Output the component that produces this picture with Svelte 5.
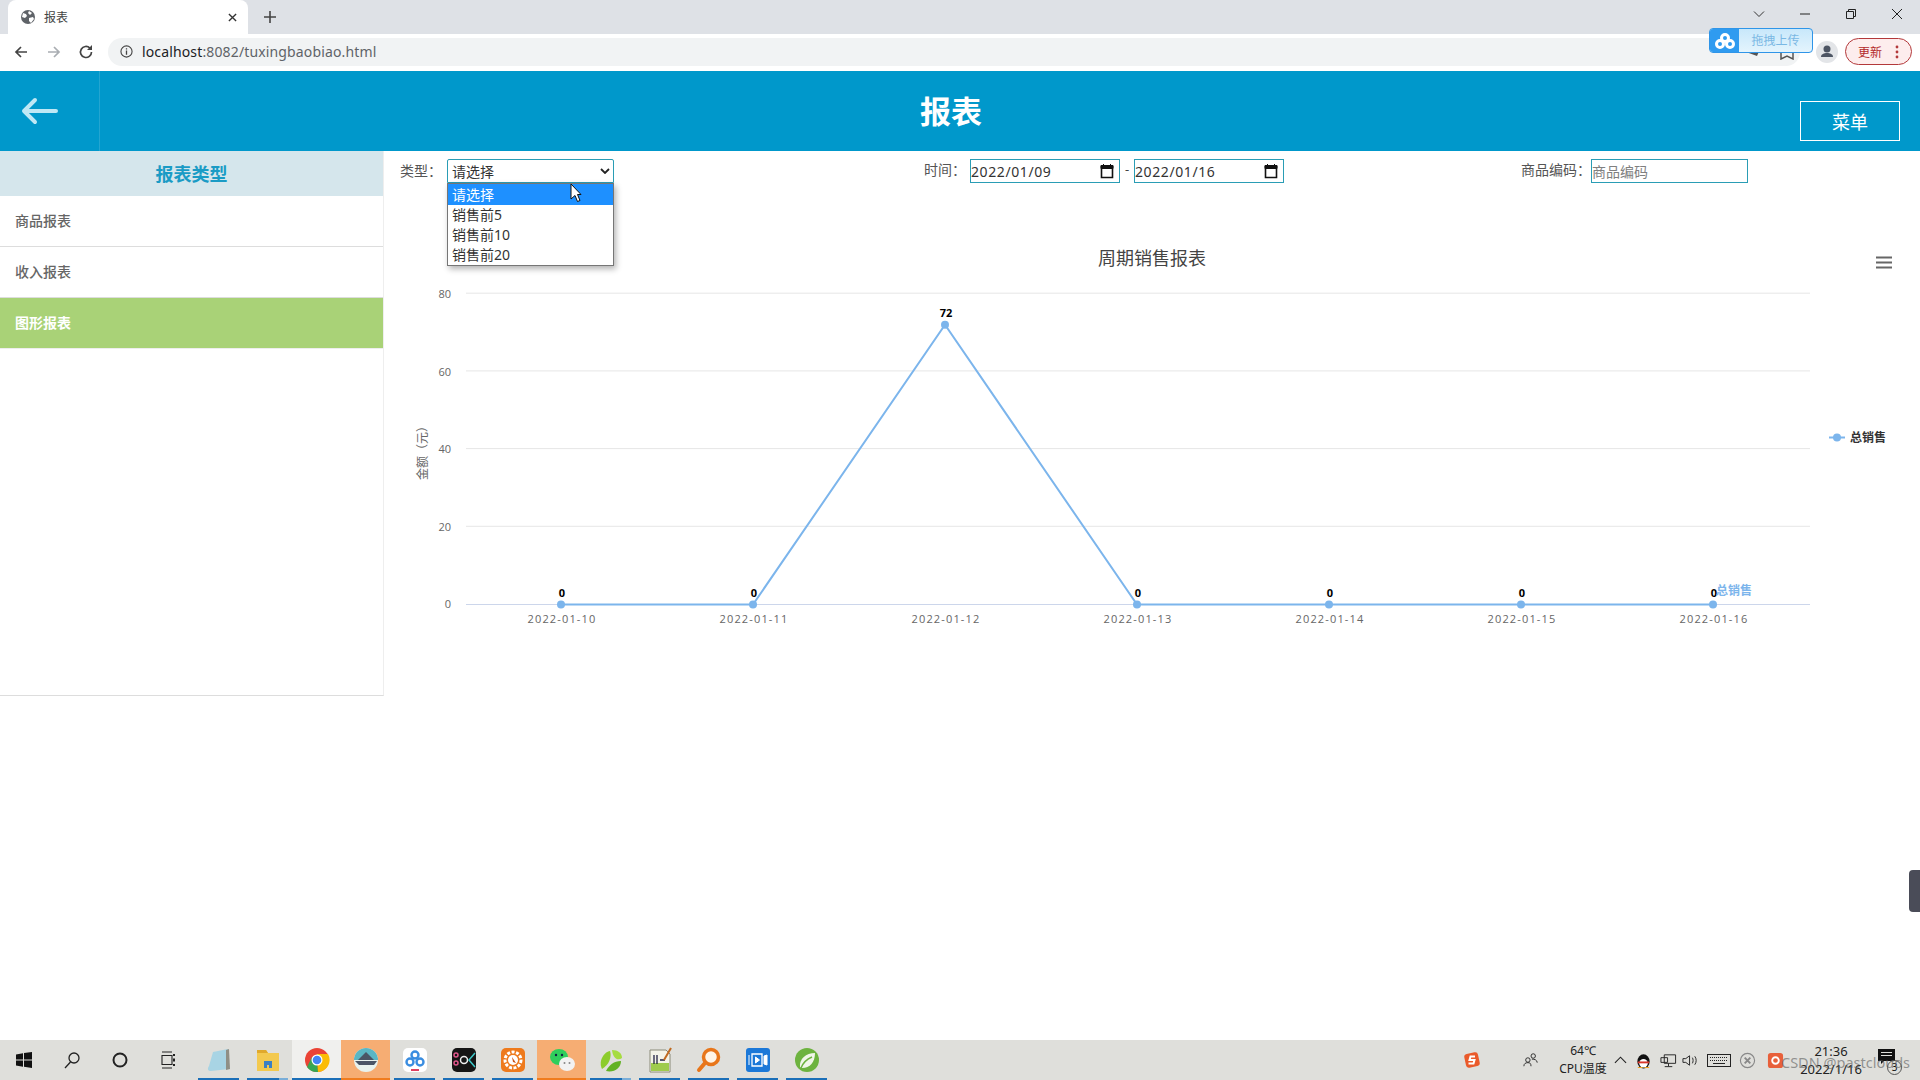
<script>
  const points = [
    { d: '2022-01-10', v: 0, x: 561 },
    { d: '2022-01-11', v: 0, x: 753 },
    { d: '2022-01-12', v: 72, x: 945 },
    { d: '2022-01-13', v: 0, x: 1137 },
    { d: '2022-01-14', v: 0, x: 1329 },
    { d: '2022-01-15', v: 0, x: 1521 },
    { d: '2022-01-16', v: 0, x: 1713 }
  ];
  const yOf = (v) => 604.5 - v * 3.885;
  const line = points.map((p) => `${p.x},${yOf(p.v)}`).join(' ');
  const ticks = [80, 60, 40, 20, 0];
  const menu = ['商品报表', '收入报表', '图形报表'];
  const options = ['请选择', '销售前5', '销售前10', '销售前20'];
</script>

<div class="screen">
  <div class="tabstrip">
    <div class="tab">
      <svg class="fav" viewBox="0 0 16 16"><circle cx="8" cy="8" r="7" fill="#5f6368"/><path d="M3 4l3 1 1 2-2 2-3-1zM9 2l3 2-2 2-2-2zM9 9l4-1 1 2-3 4-2-2z" fill="#fff"/></svg>
      <span class="tabtitle">报表</span>
      <svg class="tabx" viewBox="0 0 10 10"><path d="M1 1l8 8M9 1l-8 8" stroke="#333" stroke-width="1.5"/></svg>
    </div>
    <svg class="plus" viewBox="0 0 12 12"><path d="M6 0v12M0 6h12" stroke="#444" stroke-width="1.6"/></svg>
    <div class="winctl">
      <svg viewBox="0 0 12 12"><path d="M1 3.5l5 5 5-5" fill="none" stroke="#333"/></svg>
      <svg viewBox="0 0 12 12"><path d="M1 6h10" stroke="#222" stroke-width="1"/></svg>
      <svg viewBox="0 0 12 12"><path d="M1.5 3.5h7v7h-7zM3.5 3.5v-2h7v7h-2" fill="none" stroke="#222"/></svg>
      <svg viewBox="0 0 12 12"><path d="M1 1l10 10M11 1l-10 10" stroke="#222"/></svg>
    </div>
  </div>

  <div class="toolbar">
    <svg class="nav back" viewBox="0 0 16 16"><path d="M14 8H3M8 3L3 8l5 5" fill="none" stroke="#444" stroke-width="1.7"/></svg>
    <svg class="nav fwd" viewBox="0 0 16 16"><path d="M2 8h11M8 3l5 5-5 5" fill="none" stroke="#a9adb2" stroke-width="1.7"/></svg>
    <svg class="nav reload" viewBox="0 0 16 16"><path d="M13.5 8a5.5 5.5 0 1 1-1.6-3.9" fill="none" stroke="#444" stroke-width="1.7"/><path d="M14 1v5H9z" fill="#444"/></svg>
    <div class="address">
      <svg class="info" viewBox="0 0 14 14"><circle cx="7" cy="7" r="6" fill="none" stroke="#444" stroke-width="1.2"/><path d="M7 6v4.500M7 3.500v1.400" stroke="#444" stroke-width="1.400"/></svg>
      <span class="url">localhost<span class="urlrest">:8082/tuxingbaobiao.html</span></span>
      <svg class="addr-end" viewBox="0 0 60 20"><path d="M3 12l14-3-3 7z" fill="#555"/><path d="M38 10h12v9l-6-3-6 3z" fill="none" stroke="#555" stroke-width="1.500"/></svg>
    </div>
    <div class="avatar"><svg viewBox="0 0 22 22"><circle cx="11" cy="8" r="3.500" fill="#4d5563"/><path d="M5 16c0-3 3-4 6-4s6 1 6 4z" fill="#4d5563"/></svg></div>
    <div class="update"><span>更新</span><svg viewBox="0 0 4 14"><circle cx="2" cy="2" r="1.400" fill="#b3383a"/><circle cx="2" cy="7" r="1.400" fill="#b3383a"/><circle cx="2" cy="12" r="1.400" fill="#b3383a"/></svg></div>
  </div>

  <div class="page">
    <header class="head">
      <div class="backcell">
        <svg viewBox="0 0 38 28"><path d="M3 14h32M14 3L3 14l11 11" fill="none" stroke="#bfe8f5" stroke-width="4" stroke-linecap="round" stroke-linejoin="round"/></svg>
      </div>
      <h1>报表</h1>
      <button class="menubtn">菜单</button>
    </header>

    <div class="body">
      <aside class="side">
        <div class="sidehead">报表类型</div>
        {#each menu as m, i}
          <div class="sideitem" class:active={i === 2}>{m}</div>
        {/each}
      </aside>

      <main class="main">
        <div class="filters">
          <div class="group g1">
            <label class="lb" for="sel">类型：</label>
            <div class="select" id="sel">
              <span>请选择</span>
              <svg viewBox="0 0 10 6"><path d="M1 1l4 4 4-4" fill="none" stroke="#222" stroke-width="1.800"/></svg>
            </div>
          </div>
          <div class="group g2">
            <span class="lb time">时间：</span>
            <div class="date"><span>2022/01/09</span><svg viewBox="0 0 14 16"><path d="M1.500 3.500h11v11h-11z" fill="none" stroke="#111" stroke-width="1.600"/><path d="M1 2.500h12v3H1zM3.500 1v2M10.500 1v2" fill="#111" stroke="#111"/></svg></div>
            <span class="dash">-</span>
            <div class="date"><span>2022/01/16</span><svg viewBox="0 0 14 16"><path d="M1.500 3.500h11v11h-11z" fill="none" stroke="#111" stroke-width="1.600"/><path d="M1 2.500h12v3H1zM3.500 1v2M10.500 1v2" fill="#111" stroke="#111"/></svg></div>
          </div>
          <div class="group g3">
            <label class="lb code" for="code">商品编码：</label>
            <input id="code" class="codeinput" placeholder="商品编码" />
          </div>
        </div>

        <svg class="chart" viewBox="384 230 1536 480">
          <text x="1152" y="265" text-anchor="middle" class="title">周期销售报表</text>
          <g stroke="#666" stroke-width="2.200">
            <path d="M1876 257.500h16M1876 262.500h16M1876 267.500h16"/>
          </g>
          {#each ticks as t}
            <line x1="466" x2="1810" y1={yOf(t) - (t === 0 ? 0 : 0.5)} y2={yOf(t) - (t === 0 ? 0 : 0.5)} stroke={t === 0 ? '#ccd6eb' : '#e6e6e6'} stroke-width="1"/>
            <text x="451" y={yOf(t) + (t === 0 ? 3.5 : 4.2)} text-anchor="end" class="tick">{t}</text>
          {/each}
          <text transform="translate(427 450) rotate(-90)" text-anchor="middle" class="axistitle">金额（元）</text>
          <polyline points={line} fill="none" stroke="#7cb5ec" stroke-width="2"/>
          {#each points as p}
            <circle cx={p.x} cy={yOf(p.v)} r="4" fill="#7cb5ec"/>
            <text x={p.x + 1} y={yOf(p.v) - 8} text-anchor="middle" class="dl">{p.v}</text>
            <text x={p.x + 1} y="623" text-anchor="middle" class="tick date-tick">{p.d}</text>
          {/each}
          <text x="1716" y="595" class="serieslabel">总销售</text>
          <path d="M1829 437.500h16" stroke="#7cb5ec" stroke-width="2"/>
          <circle cx="1837" cy="437.500" r="4" fill="#7cb5ec"/>
          <text x="1850" y="442" class="legend">总销售</text>
        </svg>

        <ul class="dropdown">
          {#each options as o, i}
            <li class:hl={i === 0}>{o}</li>
          {/each}
        </ul>
        <svg class="cursor" viewBox="0 0 12 20"><path d="M1 1v15l4-3.500 2.500 6 2.500-1-2.500-6H11z" fill="#fff" stroke="#111"/></svg>
      </main>
    </div>
    <div class="edgetab"></div>
  </div>

  <footer class="taskbar">
    <div class="tk sys"><svg viewBox="0 0 18 18"><path d="M1 3.500l7-1.200v6.200H1zM9 2.100L17 1v7.500H9zM1 9.500h7v6.200l-7-1.200zM9 9.500h8V17l-8-1.200z" fill="#111"/></svg></div>
    <div class="tk sys"><svg viewBox="0 0 18 18"><circle cx="11" cy="7" r="5" fill="none" stroke="#222" stroke-width="1.300"/><path d="M7.500 11L2 17" stroke="#222" stroke-width="1.300"/></svg></div>
    <div class="tk sys"><svg viewBox="0 0 18 18"><circle cx="9" cy="9" r="6.500" fill="none" stroke="#222" stroke-width="2"/></svg></div>
    <div class="tk sys last"><svg viewBox="0 0 18 18"><path d="M3 1h10M3 17h10M3 4.500h10v9H3z" fill="none" stroke="#222" stroke-width="1.100"/><path d="M15 3v2M15 7.500v3M15 13v2" stroke="#222" stroke-width="2"/></svg></div>

    <div class="tk on"><svg viewBox="0 0 26 26"><path d="M7 5l15-3 1 20-18 2C2 24 1 22 3 19z" fill="#a8d4e4"/><path d="M20 3l3-1 1 20-4 1z" fill="#8f8f86"/></svg></div>
    <div class="tk on stk"><svg viewBox="0 0 26 26"><path d="M2 3h9l2 3h11v18H2z" fill="#f3c94f"/><path d="M9 21v-7h8v7h-3v-3h-2v3z" fill="#3c80c4"/><path d="M2 3h9l2 3H2z" fill="#e0a92c"/></svg></div>
    <div class="tk on light"><svg viewBox="0 0 26 26"><circle cx="13" cy="13" r="12" fill="#ea4335"/><path d="M13 13L3 20a12 12 0 0 0 11 5z" fill="#34a853"/><path d="M13 7h11a12 12 0 0 1-10 18z" fill="#fbbc05"/><path d="M3 20L8 10l5 3z" fill="#34a853"/><circle cx="13" cy="13" r="5.500" fill="#fff"/><circle cx="13" cy="13" r="4.300" fill="#4285f4"/></svg></div>
    <div class="tk act"><svg viewBox="0 0 26 26"><circle cx="13" cy="13" r="12" fill="#e8f2ee"/><path d="M1 13a12 12 0 0 1 24 0z" fill="#5bb6c4"/><path d="M5 13l8-8 8 8zM2 14h22l-3 4H6z" fill="#4a5566"/></svg></div>
    <div class="tk on"><svg viewBox="0 0 26 26"><rect x="1" y="1" width="24" height="24" rx="5" fill="#fff"/><g fill="none" stroke="#3a8de0" stroke-width="2.400"><circle cx="13" cy="8" r="3.500"/><circle cx="8" cy="15" r="3.500"/><circle cx="18" cy="15" r="3.500"/></g><rect x="9" y="22" width="8" height="2" fill="#e04060"/></svg></div>
    <div class="tk on"><svg viewBox="0 0 26 26"><rect x="1" y="1" width="24" height="24" rx="5" fill="#151515"/><g fill="none" stroke-width="1.500"><circle cx="5" cy="8" r="2" stroke="#e0568a"/><circle cx="5" cy="16" r="2" stroke="#e0568a"/><circle cx="13" cy="13" r="3.500" stroke="#eee"/><path d="M24 6l-6 7 6 7" stroke="#3dc8c8"/></g></svg></div>
    <div class="tk on"><svg viewBox="0 0 26 26"><rect x="1" y="1" width="24" height="24" rx="5" fill="#ee7a1c"/><circle cx="13" cy="13" r="8" fill="none" stroke="#fff" stroke-width="3" stroke-dasharray="3 1.500"/><circle cx="13" cy="13" r="5" fill="#fff"/><path d="M12 10l4 6-3-1z" fill="#c9541a"/></svg></div>
    <div class="tk act"><svg viewBox="0 0 26 26"><ellipse cx="10" cy="10" rx="9" ry="8" fill="#2fce5c"/><circle cx="7" cy="8" r="1.200" fill="#124"/><circle cx="13" cy="8" r="1.200" fill="#124"/><ellipse cx="18" cy="17" rx="8" ry="7" fill="#f2f2f2"/><circle cx="15.500" cy="16" r="1" fill="#888"/><circle cx="20.500" cy="16" r="1" fill="#888"/></svg></div>
    <div class="tk on stk"><svg viewBox="0 0 26 26"><path d="M4 22C0 14 6 5 12 4c2 6-1 14-8 18z" fill="#8ccc2c"/><path d="M14 3c6 0 10 3 10 8-4 3-9 1-10-8z" fill="#a6dc40"/><path d="M8 24c3-6 8-10 15-10 0 7-7 12-15 10z" fill="#62b224"/></svg></div>
    <div class="tk on"><svg viewBox="0 0 26 26"><path d="M3 3h16l4 4v18H3z" fill="#f4f4e8" stroke="#8a8a78"/><path d="M4 16h18v8H4z" fill="#9ecb4c"/><path d="M7 17V8M10 17V8M13 13h5" stroke="#224" stroke-width="1.300"/><path d="M24 1l-7 12" stroke="#c06a20" stroke-width="2"/></svg></div>
    <div class="tk on"><svg viewBox="0 0 26 26"><circle cx="15" cy="10" r="7.500" fill="#fff4e6" stroke="#e8761a" stroke-width="3.500"/><path d="M9 16l-6 7" stroke="#e8761a" stroke-width="4" stroke-linecap="round"/></svg></div>
    <div class="tk on"><svg viewBox="0 0 26 26"><rect x="1" y="1" width="24" height="24" rx="3" fill="#1b78d8"/><path d="M7 7h10v12H7z" fill="none" stroke="#fff" stroke-width="1.300"/><path d="M10.500 10v6l4-3zM19 9l3-1v10l-3-1zM4 8v10" fill="#fff" stroke="#fff"/></svg></div>
    <div class="tk on"><svg viewBox="0 0 26 26"><circle cx="13" cy="13" r="12" fill="#6db33f"/><path d="M6 20C5 12 12 6 21 6c0 9-5 15-13 15z" fill="#f0f6e8"/><path d="M7 21c2-5 6-9 11-11" stroke="#6db33f" stroke-width="1.500" fill="none"/></svg></div>

    <div class="tray">
      <svg class="sogou" viewBox="0 0 18 18"><rect x="2" y="2" width="14" height="14" rx="3" fill="#ea5a2a" transform="rotate(-12 9 9)"/><path d="M12 5.500H7.500L6.500 9h5l-1 3.500H5.500" fill="none" stroke="#fff" stroke-width="2"/></svg>
      <svg class="people" viewBox="0 0 18 18"><circle cx="5.500" cy="9" r="2.500" fill="none" stroke="#222"/><path d="M1 16c0-3 2-4 4.500-4S9 13 9 16" fill="none" stroke="#222"/><circle cx="11.500" cy="4.500" r="2.500" fill="none" stroke="#222"/><path d="M10 8c3 0 6 1 6 4" fill="none" stroke="#222"/></svg>
      <div class="cpu"><span>64℃</span><span>CPU温度</span></div>
      <svg class="caret" viewBox="0 0 14 8"><path d="M1 7l6-6 6 6" fill="none" stroke="#222" stroke-width="1.200"/></svg>
      <svg class="ti qq" viewBox="0 0 18 18"><ellipse cx="9" cy="10" rx="6.500" ry="7.500" fill="#111"/><ellipse cx="9" cy="12" rx="4.500" ry="4.500" fill="#fff"/><path d="M3 10h12v2H3z" fill="#d8352a"/><path d="M3 17h5v-1H3zM10 17h5v-1h-5z" fill="#f0a020"/></svg>
      <svg class="ti net" viewBox="0 0 18 18"><path d="M4.500 3h12v9h-12zM1 6h7v5H1zM9 12v3M5 15.500h8" fill="#dfdfdb" stroke="#222"/></svg>
      <svg class="ti vol" viewBox="0 0 18 18"><path d="M1 7h3l4-3v10l-4-3H1z" fill="none" stroke="#222"/><path d="M11 6c1 1.500 1 4.500 0 6M13.500 4.500c2 2.500 2 6.500 0 9" fill="none" stroke="#222"/></svg>
      <svg class="kbd" viewBox="0 0 24 13"><rect x=".5" y=".5" width="23" height="12" fill="none" stroke="#222"/><path d="M3 3.500h18M3 6.500h18" stroke="#222" stroke-dasharray="1 1"/><path d="M6 9.500h12" stroke="#222"/></svg>
      <svg class="ti xc" viewBox="0 0 18 18"><circle cx="9" cy="9" r="7.500" fill="none" stroke="#888" stroke-width="1.200"/><path d="M6 6l6 6M12 6l-6 6" stroke="#888" stroke-width="2"/></svg>
      <svg class="ti red" viewBox="0 0 18 18"><rect x="1" y="1" width="16" height="16" rx="3" fill="#e8603a"/><circle cx="9" cy="9" r="3.500" fill="none" stroke="#fff" stroke-width="2"/></svg>
      <div class="clock"><span>21:36</span><span>2022/1/16</span></div>
      <svg class="notif" viewBox="0 0 20 20"><path d="M1 1h17v12H7l-3 3v-3H1z" fill="#111"/><path d="M4 4.500h11M4 7.500h11" stroke="#dfdfdb"/></svg>
    </div>
    <div class="badge">3</div>
    <span class="watermark">CSDN @pastclouds</span>
  </footer>

  <div class="baidu">
    <div class="bd-icon"><svg viewBox="0 0 22 18"><g fill="none" stroke="#fff" stroke-width="3"><circle cx="11" cy="6" r="3.500"/><circle cx="6" cy="12" r="3.500"/><circle cx="16" cy="12" r="3.500"/></g></svg></div>
    <div class="bd-text">拖拽上传</div>
  </div>
</div>

<style>
  :global(body) { margin: 0; background: #fff; }
  .screen {
    position: relative; width: 1920px; height: 1080px; overflow: hidden;
    display: flex; flex-direction: column;
    font-family: "Noto Sans", "Noto Sans CJK SC", sans-serif; color: #333;
  }
  svg { display: block; flex: none; }

  .tabstrip { height: 34px; background: #dee1e6; display: flex; align-items: flex-start; padding-left: 8px; }
  .tab { width: 240px; height: 34px; background: #fff; border-radius: 8px 8px 0 0; display: flex; align-items: center; padding: 0 11px 0 12px; box-sizing: border-box; }
  .fav { width: 16px; height: 16px; }
  .tabtitle { font-size: 12px; margin-left: 8px; color: #444; flex: 1; }
  .tabx { width: 9px; height: 9px; }
  .plus { width: 12px; height: 12px; margin: 11px 0 0 16px; }
  .winctl { margin-left: auto; display: flex; gap: 34px; padding: 8px 17px 0 0; }
  .winctl svg { width: 12px; height: 12px; }

  .toolbar { height: 37px; box-sizing: border-box; padding: 0 0 2px 13px; background: #fff; display: flex; align-items: center; }
  .nav { width: 16px; height: 16px; }
  .back { margin-right: 17px; }
  .fwd { margin-right: 16px; }
  .reload { margin-right: 14px; }
  .address { flex: none; width: 1692px; height: 28px; background: #f1f3f4; border-radius: 14px; display: flex; align-items: center; padding: 0 0 0 12px; box-sizing: border-box; }
  .info { width: 13px; height: 13px; }
  .url { font-size: 14px; margin-left: 9px; color: #202124; letter-spacing: .14px; }
  .urlrest { color: #5f6368; }
  .addr-end { width: 60px; height: 20px; margin-left: auto; margin-right: 0; position: relative; left: 3px; top: -2px; }
  .avatar { width: 22px; height: 22px; border-radius: 50%; background: #e3e5e8; margin-left: 16px; flex: none; }
  .avatar svg { width: 22px; height: 22px; }
  .update { width: 67px; height: 27px; box-sizing: border-box; border: 1px solid #b3383a; border-radius: 14px; background: #fdeded; margin-left: 7px; display: flex; align-items: center; justify-content: space-between; padding: 0 12px; font-size: 12px; color: #b3282a; flex: none; }
  .update svg { width: 4px; height: 14px; }

  .page { flex: 1; display: flex; flex-direction: column; position: relative; }
  .head { height: 80px; background: #0098cb; display: flex; align-items: center; flex: none; }
  .backcell { width: 100px; height: 80px; border-right: 1px solid #23a5d1; box-sizing: border-box; display: flex; align-items: center; padding-left: 21px; }
  .backcell svg { width: 38px; height: 28px; }
  h1 { margin: 0 0 0 820px; font-size: 31px; font-weight: 700; color: #fff; line-height: 82px; }
  .menubtn { margin-left: auto; margin-right: 20px; margin-top: 20px; width: 100px; height: 40px; box-sizing: border-box; background: transparent; border: 1px solid #fff; color: #fff; font: 18px "Noto Sans CJK SC", sans-serif; padding: 0; }

  .body { display: flex; align-items: flex-start; flex: none; }
  .side { width: 384px; height: 545px; box-sizing: border-box; border-right: 1px solid #eee; border-bottom: 1px solid #ddd; flex: none; }
  .sidehead { height: 45px; background: #d5e6ec; color: #1a9bc5; font-size: 18px; font-weight: 700; text-align: center; line-height: 47px; }
  .sideitem { height: 51px; box-sizing: border-box; border-bottom: 1px solid #ddd; padding-left: 15px; font-size: 14px; line-height: 50px; color: #666; font-weight: 500; }
  .sideitem.active { background: #a9d277; color: #fff; font-weight: 700; border-bottom-color: #eee; }

  .main { flex: 1; position: relative; }
  .filters { height: 79px; box-sizing: border-box; padding: 8px 0 0 16px; display: flex; align-items: flex-start; }
  .group { display: flex; align-items: center; height: 24px; }
  .g1 { width: 524px; }
  .g2 { width: 597px; }
  .lb { font-size: 14px; color: #555; position: relative; top: -2px; }
  .g1 .lb { width: 47px; top: -1px; }
  .time { width: 46px; }
  .code { width: 70px; white-space: nowrap; }
  .select { width: 167px; height: 24px; box-sizing: border-box; border: 1px solid #2a9db5; border-radius: 2px 2px 0 0; padding: 0 3px 0 4px; font-size: 14px; display: flex; align-items: center; justify-content: space-between; color: #333; }
  .select svg { width: 10px; height: 6px; }
  .date { width: 150px; height: 24px; box-sizing: border-box; border: 1px solid #2a9db5; display: flex; align-items: center; justify-content: space-between; padding: 0 3px 0 0; font-size: 14px; color: #333; letter-spacing: .6px; }
  .date svg { width: 14px; height: 16px; margin-right: 2px; }
  .dash { width: 14px; text-align: center; font-size: 13px; color: #444; position: relative; top: -2px; }
  .codeinput { width: 157px; height: 24px; box-sizing: border-box; border: 1px solid #2a9db5; padding: 0; font: 14px "Noto Sans CJK SC", sans-serif; outline: none; }
  .codeinput::placeholder { color: #808080; opacity: 1; }

  .chart { width: 1536px; height: 480px; }
  .title { font-size: 18px; fill: #444; }
  .tick { font-size: 11px; fill: #666; font-family: "Open Sans", sans-serif; }
  .date-tick { letter-spacing: 1.15px; }
  .axistitle { font-size: 12px; fill: #666; }
  .dl { font-size: 11px; font-weight: 700; fill: #000; font-family: "Open Sans", sans-serif; }
  .serieslabel { font-size: 12px; font-weight: 700; fill: #7cb5ec; }
  .legend { font-size: 12px; font-weight: 700; fill: #333; }

  .dropdown { position: absolute; left: 63px; top: 32px; width: 167px; box-sizing: border-box; margin: 0; padding: 0; list-style: none; border: 1px solid #767676; background: #fff; box-shadow: 2px 3px 6px rgba(0, 0, 0, .3); font-size: 14px; color: #333; }
  .dropdown li { height: 20px; line-height: 20px; padding-left: 4px; }
  .dropdown li.hl { background: #1e90ff; color: #fff; height: 21px; line-height: 22px; }
  .cursor { position: absolute; left: 186px; top: 32px; width: 12px; height: 20px; }
  .edgetab { position: absolute; right: 0; top: 799px; width: 11px; height: 42px; background: #4a4c58; border-radius: 4px 0 0 4px; }

  .taskbar { height: 40px; background: #dfdfdb; display: flex; position: relative; flex: none; }
  .tk { width: 49px; height: 40px; display: flex; align-items: center; justify-content: center; box-sizing: border-box; flex: none; position: relative; }
  .tk svg { width: 26px; height: 26px; }
  .tk.sys { width: 48px; }
  .tk.sys.last { margin-right: 2px; }
  .tk.sys svg { width: 18px; height: 18px; }
  .tk.on::after, .tk.act::after { content: ""; position: absolute; left: 4px; right: 4px; bottom: 0; height: 2px; background: #1b6fb8; }
  .tk.stk::after { background: linear-gradient(90deg, #1b6fb8 78%, #7aaed8 78%); }
  .tk.act { background: #f6ad73; }
  .tk.act::after { left: 0; right: 0; background: #f07c1e; }
  .tk.light { background: #f0f0ee; }
  .tk.light::after { left: 0; right: 0; }

  .tray { margin-left: auto; display: flex; align-items: center; height: 40px; padding-right: 23px; font-size: 12px; color: #222; }
  .sogou { width: 18px; height: 18px; margin-right: 42px; }
  .people { width: 16px; height: 16px; margin-right: 18px; }
  .cpu, .clock { display: flex; flex-direction: column; align-items: center; line-height: 18px; white-space: nowrap; }
  .cpu { width: 52px; }
  .caret { width: 13px; height: 8px; margin: 0 8px 0 5px; }
  .ti { width: 17px; height: 17px; }
  .qq { margin-right: 8px; }
  .net { margin-right: 5px; }
  .vol { margin-right: 8px; }
  .kbd { width: 24px; height: 13px; margin-right: 8px; }
  .xc { margin-right: 11px; }
  .red { margin-right: 16px; }
  .clock { width: 62px; font-size: 13px; margin-right: 15px; }
  .notif { width: 20px; height: 20px; margin-top: -4px; }
  .badge { position: absolute; right: 18px; bottom: 5px; width: 15px; height: 15px; box-sizing: border-box; border: 1px solid #555; border-radius: 50%; font-size: 10px; text-align: center; line-height: 13px; color: #111; }
  .watermark { position: absolute; left: 1781px; top: 12px; font-size: 14.500px; color: rgba(90, 90, 90, .6); white-space: nowrap; }

  .baidu { position: absolute; left: 1709px; top: 28px; width: 104px; height: 25px; border: 1px solid #2f95e8; border-radius: 4px; box-sizing: border-box; display: flex; overflow: hidden; background: linear-gradient(#c8e8fb, #e4f4fd); }
  .bd-icon { width: 29px; background: #2f9bf0; display: flex; align-items: center; justify-content: center; }
  .bd-icon svg { width: 22px; height: 18px; }
  .bd-text { flex: 1; text-align: center; line-height: 23px; font-size: 12px; color: #7ab8e4; }
</style>
